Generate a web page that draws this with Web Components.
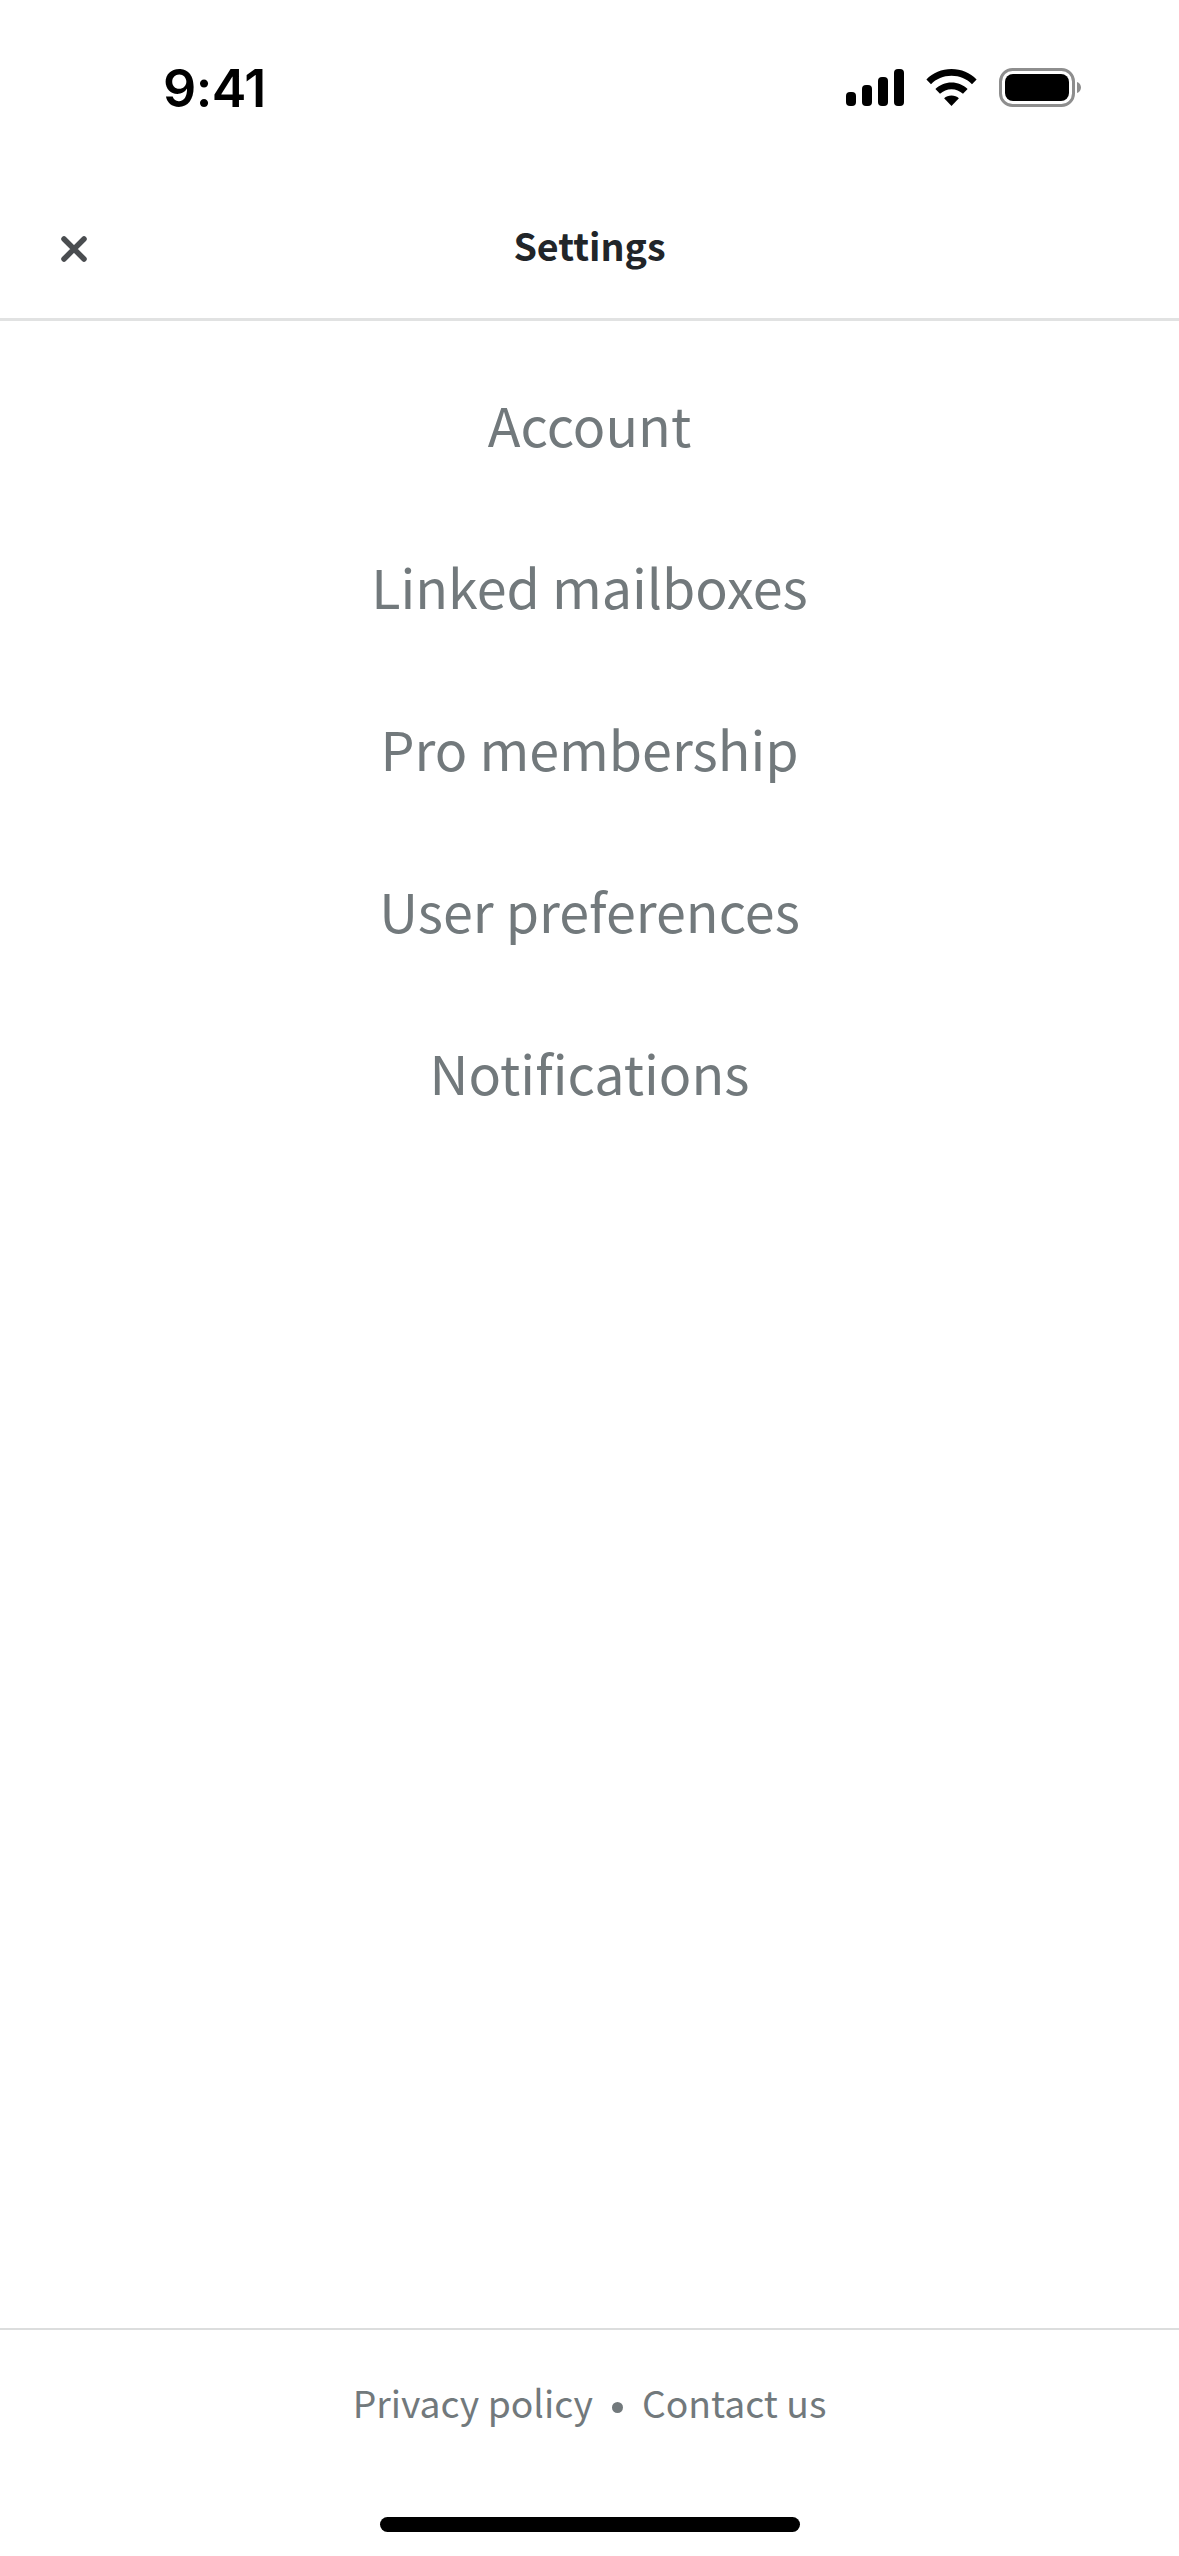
<!DOCTYPE html>
<html lang="en">
<head>
<meta charset="utf-8">
<title>Settings</title>
<style>
  html, body { margin: 0; padding: 0; background: #fff; }
  body { font-family: "Noto Sans CJK SC", "Noto Sans", sans-serif; }
</style>
</head>
<body>

<template id="status-bar">
  <style>
    :host { display: flex; justify-content: space-between; align-items: center; height: 174px; padding: 0 98px 0 163px; box-sizing: border-box; }
    .time { font: 600 52px/1 Inter, "Liberation Sans", sans-serif; color: #000; letter-spacing: -0.5px; margin-top: 3px; }
    .icons { display: flex; align-items: center; gap: 22px; }
    svg { display: block; }
  </style>
  <span class="time">9:41</span>
  <div class="icons">
    <svg width="58" height="37" viewBox="0 0 58 37" fill="#000">
      <rect x="0" y="23" width="10" height="14" rx="4"/>
      <rect x="16" y="16" width="10" height="21" rx="4"/>
      <rect x="32" y="8" width="10" height="29" rx="4"/>
      <rect x="48" y="0" width="10" height="37" rx="4"/>
    </svg>
    <svg width="51" height="37" viewBox="0 0 51 37" fill="#000">
      <path d="M25.500 0C35.400 0 44 4 50.600 10.400L46 15.200C40.700 9.900 33.600 6.800 25.500 6.800S10.300 9.900 5 15.200L.4 10.400C7 4 15.600 0 25.500 0Z"/>
      <path d="M25.500 13.500C31.800 13.500 37.300 16 41.600 20L37 24.800C33.800 21.900 29.900 20.200 25.500 20.200S17.200 21.900 14 24.800L9.400 20C13.700 16 19.200 13.500 25.500 13.500Z"/>
      <path d="M25.500 26.500C28.400 26.500 30.900 27.500 32.900 29.300L25.500 37 18.100 29.300C20.100 27.500 22.600 26.500 25.500 26.500Z"/>
    </svg>
    <svg width="82" height="39" viewBox="0 0 82 39">
      <rect x="1.500" y="1.500" width="73" height="36" rx="12" fill="none" stroke="#8e8e8e" stroke-width="3"/>
      <rect x="6" y="6" width="64" height="27" rx="8" fill="#000"/>
      <path d="M78 14c2.400.8 4 3 4 5.500s-1.600 4.700-4 5.500Z" fill="#8e8e8e"/>
    </svg>
  </div>
</template>

<template id="nav-header">
  <style>
    :host { display: grid; grid-template-columns: 1fr auto 1fr; align-items: center; height: 147px; padding: 0 61px 2px 61px; box-sizing: border-box; border-bottom: 3px solid #e1e2e2; color: #212529; }
    svg { display: block; margin-top: 8px; }
    h1 { margin: 0; font-size: 37.600px; font-weight: 700; line-height: 1; }
  </style>
  <svg width="26" height="26" viewBox="0 0 26 26" fill="none" stroke="#4a4d50" stroke-width="5.500" stroke-linecap="round">
    <path d="M3 3 23 23M23 3 3 23"/>
  </svg>
  <h1><slot></slot></h1>
  <span></span>
</template>

<template id="menu-list">
  <style>
    :host { display: flex; flex-direction: column; align-items: center; flex: 1; padding-top: 22px; }
  </style>
  <slot></slot>
</template>

<template id="menu-item">
  <style>
    :host { display: block; height: 162px; line-height: 162px; font-size: 53.800px; color: #72797c; text-align: center; }
  </style>
  <slot></slot>
</template>

<template id="page-footer">
  <style>
    :host { display: block; border-top: 2px solid #dcdddd; color: #72797c; font-size: 37.300px; }
    .links { display: flex; justify-content: center; align-items: center; gap: 19px; height: 146px; line-height: 1; }
    .dot { width: 11px; height: 11px; border-radius: 50%; background: currentColor; margin-top: 8px; }
    .home { height: 80px; padding-top: 41px; box-sizing: border-box; display: flex; justify-content: center; }
    .bar { width: 420px; height: 15px; border-radius: 8px; background: #000; }
  </style>
  <div class="links"><slot name="left"></slot><span class="dot"></span><slot name="right"></slot></div>
  <div class="home"><span class="bar"></span></div>
</template>

<template id="settings-screen">
  <style>
    :host { display: flex; flex-direction: column; width: 1179px; height: 2556px; background: #fff; overflow: hidden; }
  </style>
  <slot></slot>
</template>

<settings-screen>
  <status-bar></status-bar>
  <nav-header>Settings</nav-header>
  <menu-list>
    <menu-item>Account</menu-item>
    <menu-item>Linked mailboxes</menu-item>
    <menu-item>Pro membership</menu-item>
    <menu-item>User preferences</menu-item>
    <menu-item>Notifications</menu-item>
  </menu-list>
  <page-footer>
    <span slot="left">Privacy policy</span>
    <span slot="right">Contact us</span>
  </page-footer>
</settings-screen>

<script>
// every element just stamps its template into an open shadow root
for (const name of ['status-bar', 'nav-header', 'menu-list', 'menu-item', 'page-footer', 'settings-screen']) {
  const tpl = document.getElementById(name).content;
  customElements.define(name, class extends HTMLElement {
    constructor() {
      super();
      this.attachShadow({mode: 'open'}).appendChild(document.importNode(tpl, true));
    }
  });
}
</script>
</body>
</html>
